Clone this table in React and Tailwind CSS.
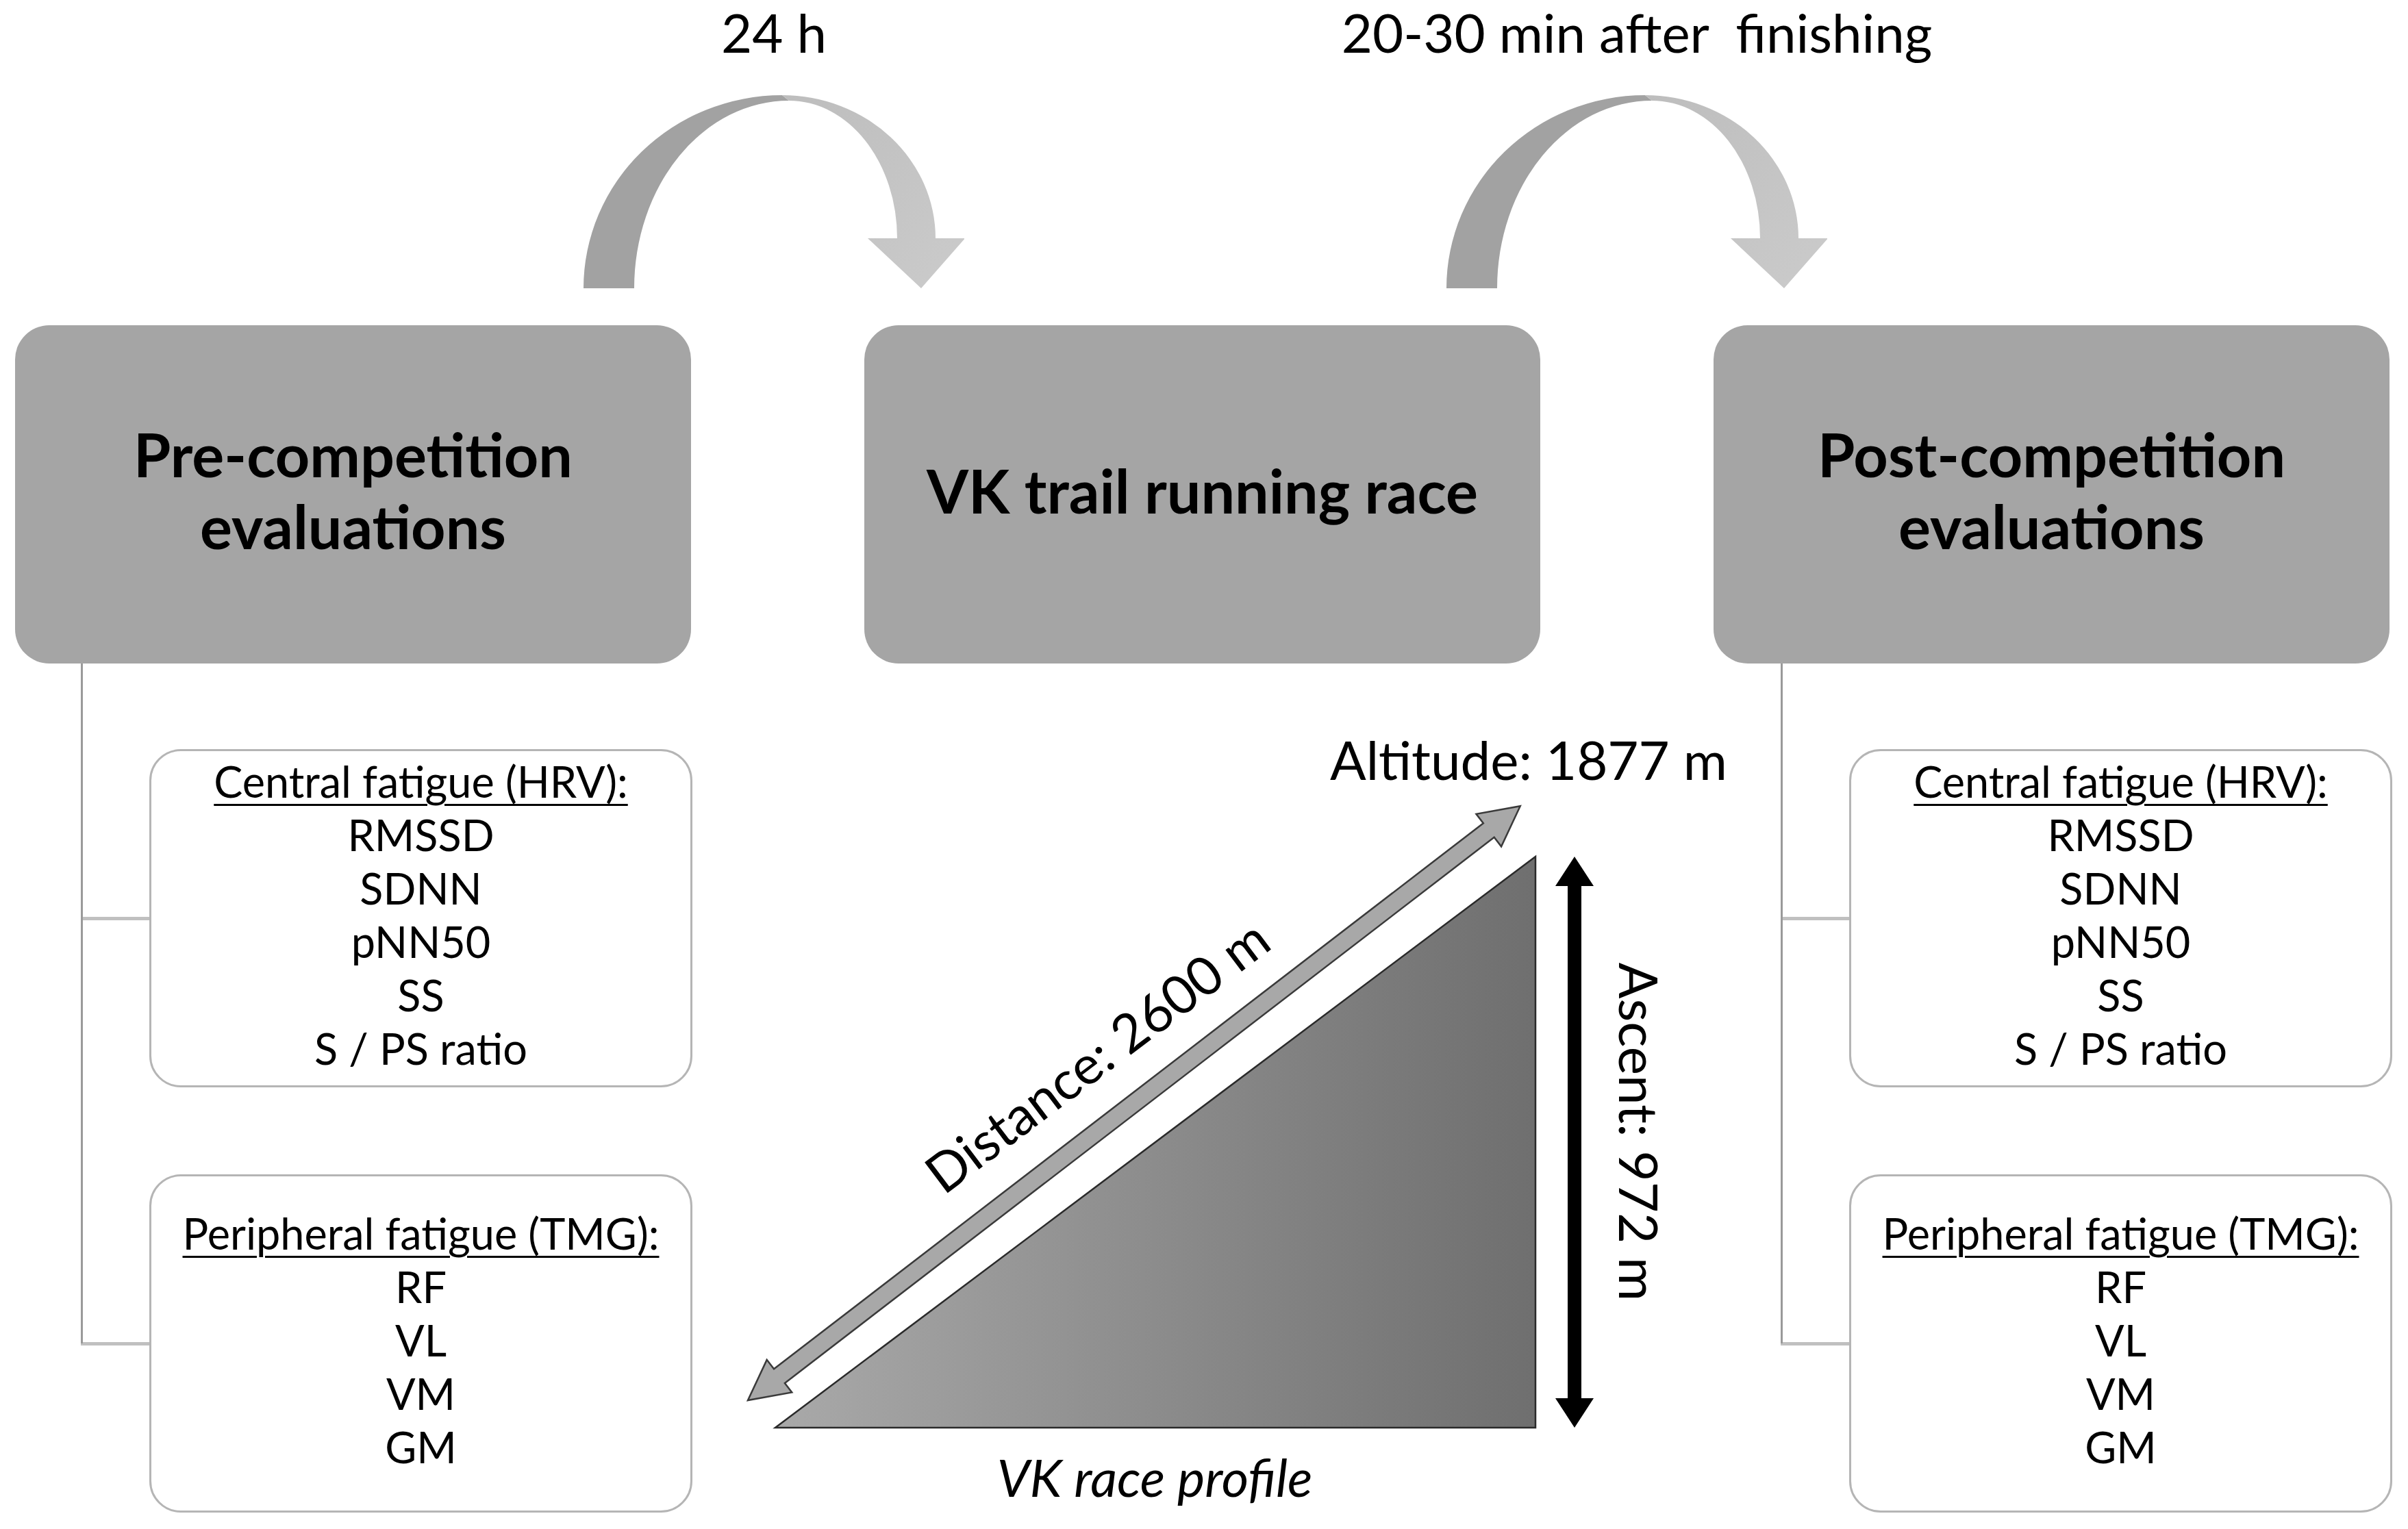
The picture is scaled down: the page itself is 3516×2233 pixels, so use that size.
import React from 'react';

const FONT = "font-['Lato','Open_Sans',sans-serif]";

function CurvedArrow({ id }) {
  return (
    <svg width="556" height="282" viewBox="0 0 556 282" className="block">
      <defs>
        <linearGradient id={`${id}-light`} x1="0" y1="0" x2="1" y2="1">
          <stop offset="0" stopColor="#bdbdbd" />
          <stop offset="1" stopColor="#cbcbcb" />
        </linearGradient>
      </defs>
      <path d="M0,282 A290,282 0 0 1 290,0 L300,8 A226,274 0 0 0 74,282 Z" fill="#a2a2a2" />
      <path
        d="M290,0 A224,209 0 0 1 514,209 L557,209 L493,282 L415,209 L458,209 A158,201 0 0 0 300,8 Z"
        fill={`url(#${id}-light)`}
      />
    </svg>
  );
}

function StepLabel({ text, id }) {
  return (
    <div className="flex w-[556px] flex-col items-center">
      <p className="mt-[8px] h-[78px] whitespace-pre text-[78px] leading-[78px] text-black">{text}</p>
      <div className="mt-[53px]">
        <CurvedArrow id={id} />
      </div>
    </div>
  );
}

function StageBox({ lines }) {
  return (
    <div className="flex h-[494px] w-[987px] flex-col items-center justify-center rounded-[50px] bg-[#a5a5a5] pb-[12px] text-center">
      {lines.map((l) => (
        <p key={l} className="text-[88px] font-bold leading-[105px] text-black">
          {l}
        </p>
      ))}
    </div>
  );
}

function MeasureBox({ title, items }) {
  return (
    <div className="flex h-[494px] w-[793px] flex-col items-center justify-center rounded-[46px] border-[3px] border-[#b5b5b5] bg-white pb-[10px] text-center text-[63px] leading-[78px] text-black">
      <p className="underline decoration-[3px] underline-offset-[9px]">{title}</p>
      {items.map((it) => (
        <p key={it}>{it}</p>
      ))}
    </div>
  );
}

function MeasureColumn({ lead }) {
  const rows = [
    { title: 'Central fatigue (HRV):', items: ['RMSSD', 'SDNN', 'pNN50', 'SS', 'S / PS ratio'] },
    { title: 'Peripheral fatigue (TMG):', items: ['RF', 'VL', 'VM', 'GM'] },
  ];
  return (
    <div className={`relative ${lead}`}>
      <div className="absolute left-0 top-0 h-[993px] w-[3px] bg-[#9a9a9a]" />
      <div className="flex flex-col gap-[127px] pt-[125px]">
        {rows.map((r) => (
          <div key={r.title} className="flex items-center">
            <div className="h-[5px] w-[100px] bg-[#c0c0c0]" />
            <MeasureBox title={r.title} items={r.items} />
          </div>
        ))}
      </div>
    </div>
  );
}

function RaceProfile() {
  const ff = "Lato, 'Open Sans', sans-serif";
  const L = 1423;
  return (
    <svg width="1494" height="1264" viewBox="0 0 1494 1264" className="relative z-10 block shrink-0 overflow-visible">
      <defs>
        <linearGradient id="tri" x1="121" y1="0" x2="1231" y2="0" gradientUnits="userSpaceOnUse">
          <stop offset="0" stopColor="#a9a9a9" />
          <stop offset="1" stopColor="#6f6f6f" />
        </linearGradient>
      </defs>
      <polygon points="121,1116 1231,1116 1231,282" fill="url(#tri)" stroke="#2a2a2a" strokeWidth="2.5" />
      <g transform="translate(81,1076) rotate(-37.58)">
        <polygon
          points={`0,0 58,-30 58,-13 ${L - 58},-13 ${L - 58},-30 ${L},0 ${L - 58},30 ${L - 58},13 58,13 58,30`}
          fill="#a8a8a8"
          stroke="#3a3a3a"
          strokeWidth="2.5"
          strokeLinejoin="miter"
        />
      </g>
      <polygon
        points="1288,282 1316,325 1298,325 1298,1073 1316,1073 1288,1116 1260,1073 1278,1073 1278,325 1260,325"
        fill="#000"
      />
      <text x="931" y="170" fontFamily={ff} fontSize="78" fill="#000">
        Altitude: 1877 m
      </text>
      <text
        transform="translate(590,572) rotate(-37)"
        textAnchor="middle"
        dominantBaseline="central"
        fontFamily={ff}
        fontSize="78"
        fill="#000"
      >
        Distance: 2600 m
      </text>
      <text
        transform="translate(1383,684) rotate(90)"
        textAnchor="middle"
        dominantBaseline="central"
        fontFamily={ff}
        fontSize="78"
        fill="#000"
      >
        Ascent: 972 m
      </text>
      <text x="675" y="1217" textAnchor="middle" fontFamily={ff} fontSize="76" fontStyle="italic" fill="#000">
        VK race profile
      </text>
    </svg>
  );
}

export default function App() {
  return (
    <div className={`h-[2233px] w-[3516px] overflow-hidden bg-white ${FONT}`}>
      <div className="flex h-[475px] gap-[704px] pl-[852px]">
        <StepLabel text="24 h" id="a1" />
        <StepLabel text="20-30 min after  finishing" id="a2" />
      </div>

      <div className="flex gap-[253px] px-[22px]">
        <StageBox lines={['Pre-competition', 'evaluations']} />
        <StageBox lines={['VK trail running race']} />
        <StageBox lines={['Post-competition', 'evaluations']} />
      </div>

      <div className="flex">
        <div className="w-[1011px] shrink-0">
          <MeasureColumn lead="ml-[118px]" />
        </div>
        <RaceProfile />
        <div className="shrink-0">
          <MeasureColumn lead="ml-[95px]" />
        </div>
      </div>
    </div>
  );
}
